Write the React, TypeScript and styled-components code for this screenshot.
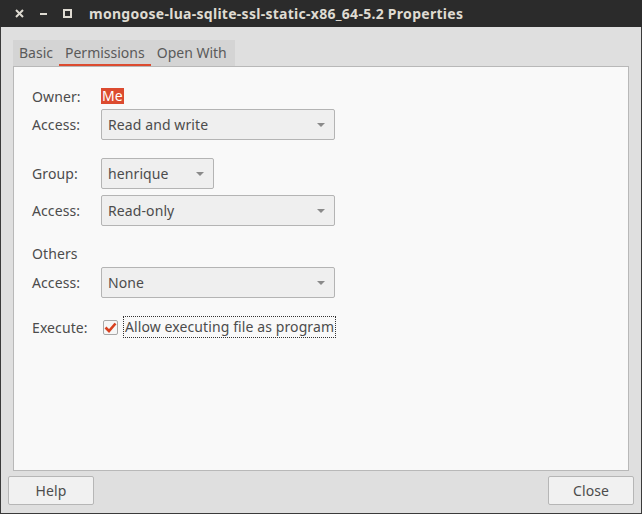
import React from 'react';
import styled, { createGlobalStyle } from 'styled-components';

const GlobalStyle = createGlobalStyle`
  html, body {
    margin: 0;
    padding: 0;
    background: #dfdfdf;
  }
  * {
    box-sizing: border-box;
  }
`;

const Window = styled.div`
  width: 642px;
  height: 514px;
  display: flex;
  flex-direction: column;
  background: #dfdfdf;
  border: 1px solid #3a3a3a;
  border-top: none;
  font-family: 'Noto Sans', 'Open Sans', sans-serif;
  font-size: 14px;
  letter-spacing: 0.1px;
  color: #4c4c4c;
`;

const TitleBar = styled.div`
  height: 27px;
  margin: 0 -1px;
  background: #2b2b2b;
  display: flex;
  align-items: center;
  padding-left: 15px;
  flex-shrink: 0;
`;

const WinButton = styled.span<{ $gap?: number }>`
  width: 9px;
  height: 9px;
  margin-right: ${p => p.$gap ?? 15}px;
  display: flex;
  align-items: center;
  justify-content: center;
`;

const Title = styled.div`
  color: #dfdbd2;
  font-family: 'Noto Sans', 'Open Sans', sans-serif;
  font-weight: 700;
  font-size: 14px;
  letter-spacing: 0.28px;
  white-space: nowrap;
`;

const Body = styled.div`
  flex: 1;
  display: flex;
  flex-direction: column;
  padding: 13px 12px 0 12px;
`;

const TabStrip = styled.div`
  align-self: flex-start;
  display: flex;
  height: 26px;
  background: #d4d4d4;
  padding: 0 2px 0 0;
  letter-spacing: 0;
`;

const Tab = styled.div<{ $active?: boolean }>`
  display: flex;
  align-items: center;
  padding: 1px 6px 0 6px;
  color: #5a5a5a;
  border-bottom: 2px solid ${p => (p.$active ? '#dc4b30' : 'transparent')};
`;

const Panel = styled.div`
  flex: 1;
  background: #f9f9f9;
  border: 1px solid #b8b8b8;
  padding: 19px 0 0 18px;
  display: flex;
  flex-direction: column;
`;

const Row = styled.div<{ $h: number; $mt: number }>`
  display: flex;
  align-items: center;
  height: ${p => p.$h}px;
  margin-top: ${p => p.$mt}px;
`;

const Label = styled.div`
  width: 69px;
  flex-shrink: 0;
  color: #4c4c4c;
`;

const Owner = styled.span`
  background: #dc4b30;
  color: #ffffff;
  padding: 0 1px;
  height: 16px;
  line-height: 16px;
  display: inline-block;
`;

const Combo = styled.div<{ $w: number }>`
  width: ${p => p.$w}px;
  height: 31px;
  border: 1px solid #b4b4b4;
  border-radius: 2px;
  background: #efefef;
  display: flex;
  align-items: center;
  justify-content: space-between;
  padding: 0 9px 0 6px;
  color: #4c4c4c;
`;

const Arrow = styled.span`
  width: 0;
  height: 0;
  border-left: 4px solid transparent;
  border-right: 4px solid transparent;
  border-top: 4px solid #8a8a8a;
`;

const CheckBox = styled.span`
  width: 15px;
  height: 15px;
  margin-left: 2px;
  border: 1px solid #a8a8a8;
  border-radius: 2px;
  background: #f6f6f6;
  display: flex;
  align-items: center;
  justify-content: center;
`;

const CheckLabel = styled.span`
  margin-left: 5px;
  padding: 0 1px;
  height: 22px;
  line-height: 20px;
  border: 1px dotted #333;
  color: #4c4c4c;
`;

const ButtonRow = styled.div`
  display: flex;
  justify-content: space-between;
  padding: 5px 7px 8px 7px;
  margin: 0 -12px;
`;

const Button = styled.div`
  width: 86px;
  height: 29px;
  border: 1px solid #b6b6b6;
  border-radius: 2px;
  background: #f1f1f1;
  display: flex;
  align-items: center;
  justify-content: center;
  color: #4c4c4c;
`;

const Combobox: React.FC<{ value: string; width: number }> = ({ value, width }) => (
  <Combo $w={width}>
    <span>{value}</span>
    <Arrow />
  </Combo>
);

export default function App() {
  return (
    <>
      <GlobalStyle />
      <Window>
        <TitleBar>
          <WinButton>
            <svg width="9" height="9" viewBox="0 0 9 9">
              <path d="M1 1 L8 8 M8 1 L1 8" stroke="#dfdbd2" strokeWidth="2" />
            </svg>
          </WinButton>
          <WinButton>
            <svg width="9" height="9" viewBox="0 0 9 9">
              <path d="M1 5 L8 5" stroke="#dfdbd2" strokeWidth="2" />
            </svg>
          </WinButton>
          <WinButton $gap={17}>
            <svg width="9" height="9" viewBox="0 0 9 9">
              <rect x="1" y="1" width="7" height="7" fill="none" stroke="#dfdbd2" strokeWidth="2" />
            </svg>
          </WinButton>
          <Title>mongoose-lua-sqlite-ssl-static-x86_64-5.2 Properties</Title>
        </TitleBar>
        <Body>
          <TabStrip>
            <Tab>Basic</Tab>
            <Tab $active>Permissions</Tab>
            <Tab>Open With</Tab>
          </TabStrip>
          <Panel>
            <Row $h={20} $mt={0}>
              <Label>Owner:</Label>
              <Owner>Me</Owner>
            </Row>
            <Row $h={31} $mt={3}>
              <Label>Access:</Label>
              <Combobox value="Read and write" width={234} />
            </Row>
            <Row $h={31} $mt={18}>
              <Label>Group:</Label>
              <Combobox value="henrique" width={113} />
            </Row>
            <Row $h={31} $mt={6}>
              <Label>Access:</Label>
              <Combobox value="Read-only" width={234} />
            </Row>
            <Row $h={20} $mt={17}>
              <Label>Others</Label>
            </Row>
            <Row $h={31} $mt={4}>
              <Label>Access:</Label>
              <Combobox value="None" width={234} />
            </Row>
            <Row $h={22} $mt={18}>
              <Label>Execute:</Label>
              <CheckBox>
                <svg width="13" height="11" viewBox="0 0 13 11">
                  <path d="M1.5 5.5 L5 9 L11.5 1.5" fill="none" stroke="#d8401f" strokeWidth="2.6" />
                </svg>
              </CheckBox>
              <CheckLabel>Allow executing file as program</CheckLabel>
            </Row>
          </Panel>
          <ButtonRow>
            <Button>Help</Button>
            <Button>Close</Button>
          </ButtonRow>
        </Body>
      </Window>
    </>
  );
}
